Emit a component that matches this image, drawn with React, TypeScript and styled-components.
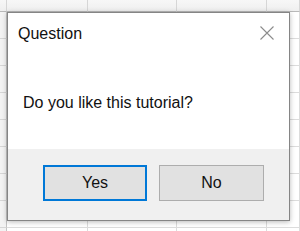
import React from "react";
import styled, { createGlobalStyle } from "styled-components";

const Global = createGlobalStyle`
  html, body { margin: 0; padding: 0; background: #ffffff; }
  body { width: 300px; height: 231px; overflow: hidden; font-family: "Liberation Sans", Arial, sans-serif; }
  #root { position: relative; width: 300px; height: 231px; }
`;

const COLS = [7, 81, 89, 90, 33];
const ROWS = 9;

const Sheet = styled.div`
  display: grid;
  grid-template-columns: ${COLS.map((c) => `${c}px`).join(" ")};
  grid-template-rows: 12px repeat(${ROWS}, 27px);
  width: 300px;
  height: 231px;
  overflow: hidden;
  background: #ffffff;
`;

const HeadCell = styled.div`
  background: linear-gradient(#f7f7f7, #efefef);
  border-right: 1px solid #d6d6d6;
  border-bottom: 1px solid #b9b9b9;
`;

const RowHead = styled.div`
  background: #f3f3f3;
  border-right: 1px solid #c4c4c4;
  border-bottom: 1px solid #d6d6d6;
`;

const Cell = styled.div`
  border-right: 1px solid #dcdcdc;
  border-bottom: 1px solid #dcdcdc;
`;

const Dialog = styled.div`
  position: absolute;
  left: 7px;
  top: 12px;
  width: 283px;
  height: 209px;
  box-sizing: border-box;
  border: 1px solid #858585;
  background: #ffffff;
  box-shadow: 0 1px 5px rgba(0, 0, 0, 0.28);
  display: flex;
  flex-direction: column;
  color: #111111;
  font-family: "Liberation Sans", Arial, sans-serif;
  font-size: 16px;
`;

const TitleBar = styled.div`
  display: flex;
  justify-content: space-between;
  align-items: flex-start;
  padding: 11px 15px 0 10px;
`;

const Title = styled.div`
  line-height: 20px;
`;

const Close = styled.svg`
  margin-top: 2px;
  width: 14px;
  height: 14px;
  display: block;
`;

const Message = styled.div`
  line-height: 20px;
  padding: 49px 0 0 15px;
`;

const Footer = styled.div`
  margin-top: auto;
  height: 71px;
  box-sizing: border-box;
  background: #f0f0f0;
  display: flex;
  justify-content: flex-end;
  align-items: flex-start;
  gap: 12px;
  padding: 16px 25px 0 0;
`;

const Button = styled.button<{ $default?: boolean }>`
  box-sizing: border-box;
  width: ${(p) => (p.$default ? 104 : 105)}px;
  height: 36px;
  margin: 0;
  padding: 0;
  background: #e1e1e1;
  border: ${(p) => (p.$default ? "2px solid #0078d7" : "1px solid #adadad")};
  font-family: "Liberation Sans", Arial, sans-serif;
  font-size: 16px;
  color: #111111;
  text-align: center;
  line-height: 20px;
`;

export default function App() {
  const cells: React.ReactNode[] = [];
  for (let r = 0; r <= ROWS; r++) {
    for (let c = 0; c < COLS.length; c++) {
      const key = `${r}-${c}`;
      if (r === 0) cells.push(<HeadCell key={key} />);
      else if (c === 0) cells.push(<RowHead key={key} />);
      else cells.push(<Cell key={key} />);
    }
  }
  return (
    <>
      <Global />
      <Sheet>{cells}</Sheet>
      <Dialog>
        <TitleBar>
          <Title>Question</Title>
          <Close viewBox="0 0 14 14">
            <path d="M0.5 0.5 L13.5 13.5 M13.5 0.5 L0.5 13.5" stroke="#8c8c8c" strokeWidth="1.1" fill="none" />
          </Close>
        </TitleBar>
        <Message>Do you like this tutorial?</Message>
        <Footer>
          <Button $default>Yes</Button>
          <Button>No</Button>
        </Footer>
      </Dialog>
    </>
  );
}
